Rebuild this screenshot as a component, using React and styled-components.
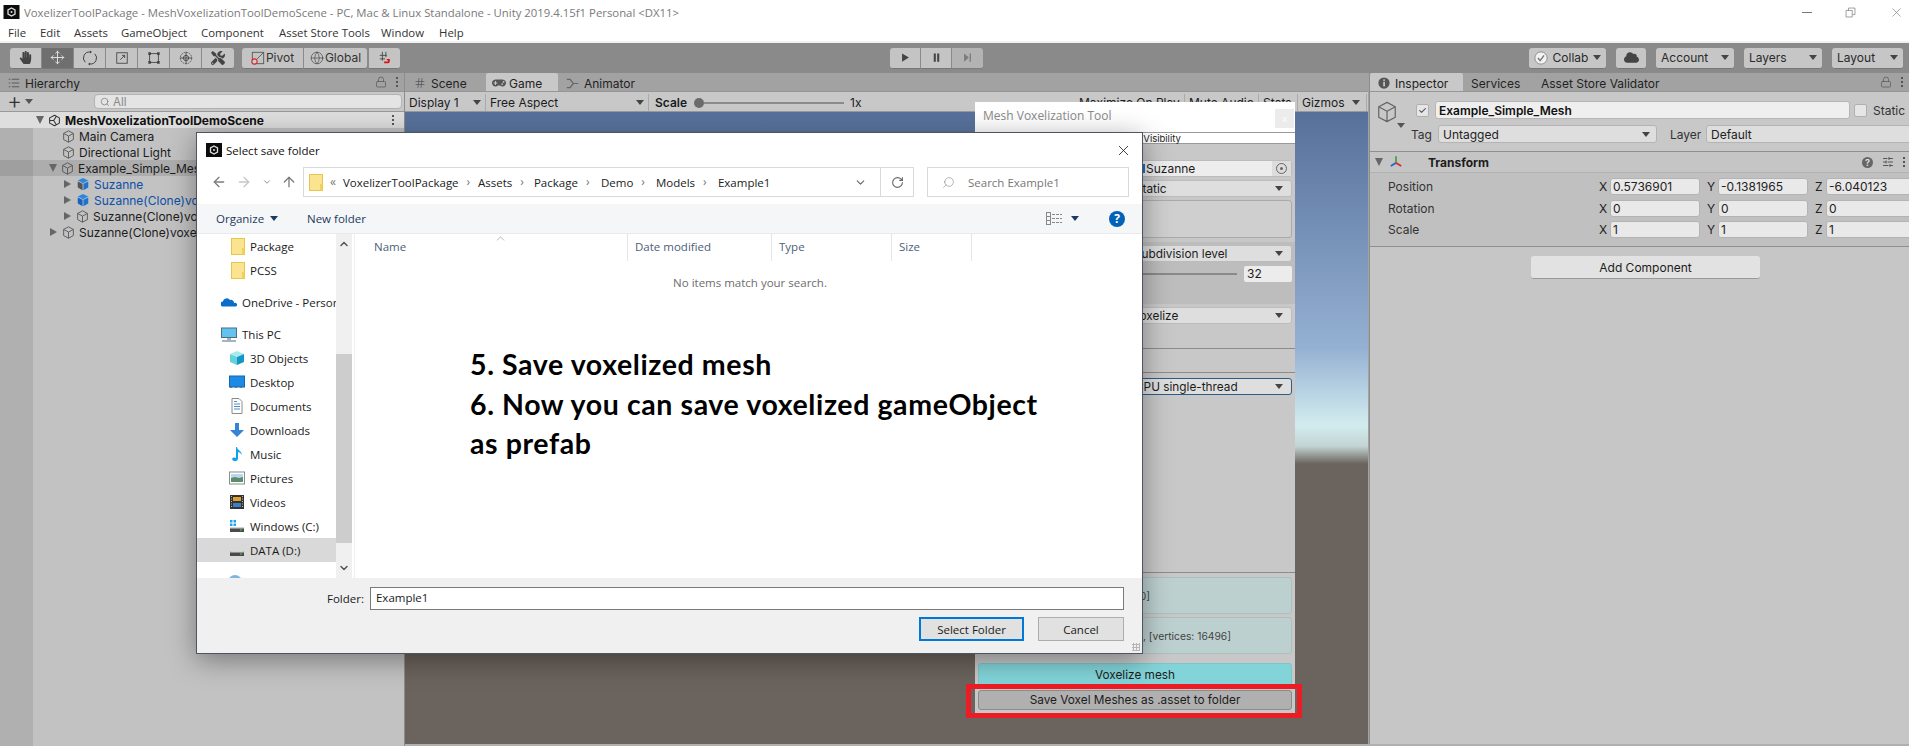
import React from 'react';
import styled, { createGlobalStyle } from 'styled-components';
import {
  ArrowLeft, ArrowRight, ArrowUp, ChevronDown, ChevronUp, Globe, Hash, Lock, Move, RotateCw, Search, SlidersHorizontal, X,
} from 'lucide-react';
import { FaCloud, FaGamepad, FaHandPaper, FaTools } from 'react-icons/fa';

const UNITY = '"Inter", "Liberation Sans", sans-serif';
const WIN = '"Open Sans", "Liberation Sans", sans-serif';

const GlobalStyle = createGlobalStyle`
  html, body { margin: 0; padding: 0; background: #fff; }
  * { box-sizing: border-box; }
`;

const Page = styled.div`
  position: relative;
  width: 1909px;
  height: 746px;
  overflow: hidden;
  display: flex;
  flex-direction: column;
  font-family: ${UNITY};
  font-size: 11.5px;
  color: #1c1c1c;
  background: #a2a2a2;
`;

/* ---- window chrome ---- */
const TitleBar = styled.div`
  height: 22px;
  flex: none;
  display: flex;
  align-items: center;
  padding: 2px 0 0 3px;
  gap: 4px;
  background: #fff;
  color: #7a7a7a;
  font-family: ${WIN};
  font-size: 11.37px;
  white-space: nowrap;
`;
const WinControls = styled.div`
  margin-left: auto;
  display: flex;
  align-items: center;
  gap: 33px;
  padding-right: 5px;
  color: #777;
`;
const MinDash = styled.div`
  width: 10px;
  height: 1px;
  background: #777;
`;
const MenuBar = styled.div`
  height: 21px;
  flex: none;
  display: flex;
  align-items: center;
  padding: 2px 0 0 8px;
  background: #fff;
  font-family: ${WIN};
  font-size: 11.4px;
  color: #333;
  border-bottom: 2px solid #f1f1f1;
`;
const MenuItem = styled.span`
  width: ${(p) => p.$w}px;
  flex: none;
`;
const Toolbar = styled.div`
  height: 30px;
  flex: none;
  display: flex;
  align-items: center;
  padding: 0 4px 0 10px;
  background: #8a8a8a;
`;
const BtnGroup = styled.div`
  display: flex;
  flex: none;
  height: 21px;
  margin-right: ${(p) => p.$mr || 0}px;
  margin-left: ${(p) => p.$ml || 0}px;
`;
const ToolBtn = styled.div`
  width: ${(p) => p.$w || 32}px;
  flex: none;
  display: flex;
  align-items: center;
  justify-content: center;
  gap: 1px;
  background: ${(p) => (p.$on ? '#6f6f6f' : '#c4c4c4')};
  border-right: 1px solid #8a8a8a;
  border-bottom: 1px solid #777;
  color: ${(p) => (p.$on ? '#ddd' : p.$dim ? '#777' : '#333')};
  font-size: 12px;
  white-space: nowrap;
  opacity: ${(p) => (p.$dim ? 0.72 : 1)};
  &:first-child { border-radius: 3px 0 0 3px; }
  &:last-child { border-radius: 0 3px 3px 0; border-right: 0; }
`;
const PlainBtn = styled.div`
  width: ${(p) => p.$w}px;
  height: 21px;
  flex: none;
  margin-right: 10px;
  padding: 0 5px;
  display: flex;
  align-items: center;
  justify-content: ${(p) => (p.$center ? 'center' : 'space-between')};
  background: #c6c6c6;
  border-bottom: 1px solid #777;
  border-radius: 3px;
  font-size: 12px;
  color: #2a2a2a;
  &:last-child { margin-right: 0; }
`;
const Caret = styled.i`
  display: inline-block;
  flex: none;
  border-left: 4px solid transparent;
  border-right: 4px solid transparent;
  border-top: 5px solid ${(p) => p.$c || '#444'};
`;

const Workspace = styled.div`
  flex: 1;
  display: flex;
  min-height: 0;
`;
const TabRow = styled.div`
  height: 19px;
  flex: none;
  display: flex;
  align-items: stretch;
  background: #a2a2a2;
  border-bottom: 1px solid #969696;
  font-size: 12px;
`;
const Tab = styled.div`
  width: ${(p) => p.$w}px;
  flex: none;
  padding: 2px 0 0 ${(p) => p.$pl ?? 8}px;
  display: flex;
  align-items: center;
  gap: ${(p) => p.$gap ?? 5}px;
  white-space: nowrap;
  background: ${(p) => (p.$on ? '#c8c8c8' : 'transparent')};
  border-radius: 2px 2px 0 0;
  color: #222;
`;
const TabTools = styled.div`
  margin-left: auto;
  width: 36px;
  display: flex;
  align-items: center;
  justify-content: center;
  gap: 9px;
  color: #555;
`;
const Dots = styled.span`
  width: 2px;
  height: 2px;
  flex: none;
  background: #555;
  box-shadow: 0 -4px 0 #555, 0 4px 0 #555;
`;

/* ---- hierarchy ---- */
const Hierarchy = styled.section`
  width: 405px;
  flex: none;
  display: flex;
  flex-direction: column;
  border-right: 1px solid #8d8d8d;
`;
const HierTools = styled.div`
  height: 20px;
  flex: none;
  display: flex;
  align-items: center;
  padding: 0 2px 0 7px;
  background: #c8c8c8;
  border-bottom: 1px solid #999;
`;
const PlusMark = styled.span`
  width: 87px;
  display: flex;
  align-items: center;
  gap: 3px;
  font-size: 23px;
  font-weight: 300;
  line-height: 17px;
  color: #333;
`;
const SearchBox = styled.div`
  flex: 1;
  height: 15px;
  display: flex;
  align-items: center;
  gap: 3px;
  padding-left: 5px;
  background: #e4e4e4;
  border: 1px solid #b2b2b2;
  border-radius: 4px;
  color: #888;
`;
const TreeBody = styled.div`
  flex: 1;
  background: linear-gradient(90deg, #b0b0b0 33px, #c2c2c2 33px);
`;
const SceneRow = styled.div`
  height: 16px;
  display: flex;
  align-items: center;
  padding: 0 10px 0 36px;
  gap: 4px;
  background: #dedede;
  font-weight: 700;
  font-size: 12px;
  color: #111;
`;
const SceneDots = styled(Dots)`
  margin-left: auto;
`;
const TreeRow = styled.div`
  height: 16px;
  display: flex;
  align-items: center;
  gap: 4px;
  padding-left: ${(p) => p.$indent}px;
  white-space: nowrap;
  font-size: 12px;
  overflow: hidden;
  color: ${(p) => (p.$blue ? '#0d4fa8' : '#1c1c1c')};
  background: ${(p) => (p.$sel ? 'linear-gradient(90deg, #9f9f9f 33px, #adadad 33px)' : 'transparent')};
`;
const Arrow = styled.i`
  display: inline-block;
  flex: none;
  width: 0;
  height: 0;
  ${(p) => (p.$down
    ? 'border-left: 4.5px solid transparent; border-right: 4.5px solid transparent; border-top: 8px solid #666;'
    : 'border-top: 4.5px solid transparent; border-bottom: 4.5px solid transparent; border-left: 7px solid #666; margin: 0 1px;')}
`;

/* ---- game view ---- */
const GamePanel = styled.section`
  width: 963px;
  flex: none;
  display: flex;
  flex-direction: column;
  margin-right: 1px;
`;
const GameTools = styled.div`
  height: 20px;
  flex: none;
  padding-top: 2px;
  display: flex;
  align-items: center;
  background: #c8c8c8;
  border-bottom: 1px solid #9a9a9a;
  white-space: nowrap;
  font-size: 12px;
`;
const GameCell = styled.div`
  width: ${(p) => p.$w}px;
  flex: none;
  height: 100%;
  padding: 0 ${(p) => p.$pr || 4}px 0 4px;
  display: flex;
  align-items: center;
  justify-content: space-between;
  border-right: 1px solid #aaa;
`;
const ScaleSlider = styled.div`
  width: 426px;
  flex: none;
  display: flex;
  align-items: center;
  padding-left: 6px;
  font-weight: 600;
`;
const ScaleThumb = styled.i`
  width: 10px;
  height: 10px;
  margin-left: 7px;
  flex: none;
  border-radius: 50%;
  background: #6b6b6b;
`;
const ScaleLine = styled.i`
  width: 140px;
  height: 2px;
  background: #8b8b8b;
  margin-right: 6px;
`;
const ScaleValue = styled.span`
  font-weight: 400;
`;
const Viewport = styled.div`
  flex: 1;
  background: linear-gradient(180deg, #56709a 0, #94b0d2 235px, #d2ecee 313px, #c4d4d4 334px, #6b635d 352px, #6b635d 100%);
`;

/* ---- tool window floating on the game view ---- */
const ToolWindow = styled.div`
  position: absolute;
  left: 975px;
  top: 102px;
  width: 320px;
  height: 611px;
  display: flex;
  flex-direction: column;
  background: #c8c8c8;
  font-size: 11.8px;
  white-space: nowrap;
`;
const ToolHead = styled.div`
  height: 30px;
  flex: none;
  display: flex;
  justify-content: space-between;
  padding-left: 8px;
  padding-top: 5px;
  background: #fff;
  color: #8a8a8a;
  font-family: ${WIN};
  font-size: 12px;
`;
const ToolClose = styled.div`
  width: 19px;
  height: 19px;
  margin: 2px 1px 0 0;
  background: #ececec;
  color: #fff;
  font-size: 9px;
  text-align: center;
  line-height: 19px;
`;
const ToolStrip = styled.div`
  height: 12px;
  flex: none;
  margin-bottom: 16px;
  padding-left: 137px;
  display: flex;
  align-items: center;
  background: #fff;
  border: 1px solid #999;
  border-width: 1px 0;
  font-size: 9.5px;
  color: #222;
`;
const ToolField = styled.div`
  height: ${(p) => p.$h || 17}px;
  flex: none;
  margin: ${(p) => p.$mt || 0}px 3px 0 6px;
  padding-left: ${(p) => p.$pl || 153}px;
  padding-right: 8px;
  display: flex;
  align-items: center;
  justify-content: space-between;
  background: ${(p) => p.$bg || '#dedede'};
  border: 1px solid ${(p) => p.$line || '#bcbcbc'};
  border-radius: 3px;
`;
const ObjectField = styled(ToolField)`
  padding-right: 0;
  font-size: 12px;
`;
const ObjectName = styled.span`
  display: flex;
  align-items: center;
  gap: 1px;
`;
const ObjectMark = styled.i`
  width: 5px;
  height: 9px;
  background: #1f6fc8;
`;
const PickerBox = styled.div`
  width: 19px;
  height: 100%;
  display: flex;
  align-items: center;
  justify-content: center;
  background: #dcdcdc;
`;
const PickerDot = styled.i`
  width: 11px;
  height: 11px;
  border-radius: 50%;
  border: 1px solid #666;
  position: relative;
  &::after {
    content: '';
    position: absolute;
    left: 3px;
    top: 3px;
    width: 3px;
    height: 3px;
    border-radius: 50%;
    background: #666;
  }
`;
const ToolBand = styled.div`
  height: 62px;
  flex: none;
  margin-top: 4px;
  padding-top: 3px;
  background: #bdbdbd;
`;
const SliderLine = styled.div`
  height: 17px;
  margin: 3px 3px 0 6px;
  display: flex;
  align-items: center;
  justify-content: flex-end;
  gap: 7px;
`;
const SliderTrack = styled.i`
  width: 100px;
  height: 2px;
  background: #8a8a8a;
`;
const SliderValue = styled.span`
  width: 48px;
  height: 16px;
  padding-left: 3px;
  line-height: 16px;
  background: #ececec;
  border-radius: 2px;
  font-size: 12px;
`;
const ToolGap = styled.div`
  height: ${(p) => p.$h}px;
  flex: none;
  padding: 5px 0 0 6px;
  border-bottom: 1px solid #8c8c8c;
`;
const TinyField = styled.div`
  width: 162px;
  height: 13px;
  background: #d4d4d4;
  border: 1px solid #b0b0b0;
  border-radius: 2px;
`;
const TealBox = styled.div`
  height: 37px;
  flex: none;
  margin: ${(p) => p.$mt}px 3px 0 3px;
  padding-right: ${(p) => p.$pr}px;
  display: flex;
  align-items: center;
  justify-content: flex-end;
  background: #bdd0d0;
  border: 1px solid #adbebe;
  border-radius: 3px;
  color: #444;
  font-size: 10.3px;
`;
const ActionBtn = styled.div`
  height: ${(p) => p.$h}px;
  flex: none;
  margin: ${(p) => p.$mt}px 3px 0 3px;
  display: flex;
  align-items: center;
  justify-content: center;
  background: ${(p) => p.$bg};
  border: 1px solid ${(p) => p.$line};
  border-radius: 3px;
`;
const RedFrame = styled.div`
  position: absolute;
  left: 966px;
  top: 684px;
  width: 336px;
  height: 34px;
  border: 5px solid #ed1c24;
`;

/* ---- inspector ---- */
const Inspector = styled.section`
  flex: 1;
  min-width: 0;
  display: flex;
  flex-direction: column;
  background: #c6c6c6;
  border-left: 1px solid #8d8d8d;
`;
const InspHead = styled.div`
  height: 60px;
  flex: none;
  padding: 9px 0 0 6px;
  display: flex;
  background: #c8c8c8;
  border-bottom: 1px solid #8f8f8f;
`;
const ObjectIcon = styled.div`
  position: relative;
  flex: none;
  width: 22px;
  height: 22px;
  color: #666;
`;
const ObjectCaret = styled(Caret)`
  position: absolute;
  right: -7px;
  bottom: -5px;
`;
const InspMain = styled.div`
  flex: 1;
  min-width: 0;
  margin-left: 13px;
  overflow: hidden;
`;
const InspLine = styled.div`
  height: 18px;
  display: flex;
  align-items: center;
  margin-bottom: 6px;
  padding-left: ${(p) => p.$pl || 0}px;
  font-size: 12px;
  white-space: nowrap;
  color: #333;
`;
const CheckBox = styled.div`
  width: 13px;
  height: 13px;
  flex: none;
  display: flex;
  align-items: center;
  justify-content: center;
  margin: 0 6px 0 ${(p) => p.$ml || 0}px;
  background: #e6e6e6;
  border: 1px solid #b0b0b0;
  border-radius: 2px;
  color: #333;
  font-size: 10px;
  line-height: 1;
`;
const NameInput = styled.div`
  width: 415px;
  height: 18px;
  flex: none;
  padding-left: 3px;
  line-height: 17px;
  background: #efefef;
  border: 1px solid #b6b6b6;
  border-radius: 3px;
  font-weight: 600;
  color: #111;
`;
const FieldLabel = styled.span`
  width: ${(p) => p.$w}px;
  flex: none;
`;
const Select = styled.div`
  width: ${(p) => p.$w}px;
  height: 18px;
  flex: none;
  margin-right: ${(p) => p.$mr || 0}px;
  padding: 0 6px 0 4px;
  display: flex;
  align-items: center;
  justify-content: space-between;
  background: #dedede;
  border: 1px solid #b4b4b4;
  border-radius: 3px;
  color: #222;
`;
const CompHead = styled.div`
  height: 21px;
  flex: none;
  padding: 0 4px 0 5px;
  display: flex;
  align-items: center;
  background: #c5c5c5;
  border-bottom: 1px solid #b2b2b2;
  font-weight: 700;
  font-size: 12px;
`;
const CompIcon = styled.span`
  margin-left: 6px;
`;
const CompName = styled.span`
  margin-left: 25px;
`;
const CompTools = styled.span`
  margin-left: auto;
  display: flex;
  align-items: center;
  gap: 9px;
  color: #555;
`;
const HelpDot = styled.i`
  width: 11px;
  height: 11px;
  border-radius: 50%;
  background: #666;
  color: #ddd;
  font: 700 9px/11px ${UNITY};
  text-align: center;
`;
const TransformBody = styled.div`
  flex: none;
  padding: 5px 0 8px 18px;
  border-bottom: 1px solid #8f8f8f;
  background: #c0c0c0;
  overflow: hidden;
`;
const VecRow = styled.div`
  height: 17px;
  margin-bottom: ${(p) => p.$mb}px;
  display: flex;
  align-items: center;
  font-size: 12px;
  color: #333;
`;
const VecLabel = styled.span`
  width: 211px;
  flex: none;
`;
const Axis = styled.span`
  width: 11px;
  flex: none;
  color: #222;
`;
const VecInput = styled.span`
  width: 90px;
  height: 17px;
  flex: none;
  margin-right: 7px;
  padding-left: 2px;
  line-height: 16px;
  background: #e9e9e9;
  border: 1px solid #b4b4b4;
  border-radius: 3px;
  color: #222;
  overflow: hidden;
`;
const AddComponent = styled.div`
  width: 229px;
  height: 23px;
  flex: none;
  margin: 9px 0 0 161px;
  display: flex;
  align-items: center;
  justify-content: center;
  background: #e2e2e2;
  border-bottom: 1px solid #999;
  border-radius: 3px;
  font-size: 12px;
`;
const BottomEdge = styled.div`
  position: absolute;
  left: 405px;
  right: 0;
  bottom: 0;
  height: 2px;
  background: #b0b0b0;
`;

/* ---- file dialog ---- */
const Dialog = styled.div`
  position: absolute;
  left: 196px;
  top: 132px;
  width: 947px;
  height: 522px;
  display: flex;
  flex-direction: column;
  background: #fff;
  border: 1px solid #4f5560;
  box-shadow: 0 6px 26px rgba(0, 0, 0, 0.38);
  font-family: ${WIN};
  font-size: 11.5px;
  color: #1a1a1a;
  white-space: nowrap;
`;
const DlgTitle = styled.div`
  height: 34px;
  flex: none;
  padding: 0 10px 0 9px;
  display: flex;
  align-items: center;
  gap: 4px;
  color: #111;
`;
const DlgClose = styled.div`
  margin-left: auto;
  display: flex;
  color: #111;
`;
const DlgNav = styled.div`
  height: 37px;
  flex: none;
  display: flex;
  padding-right: 13px;
`;
const NavArrows = styled.div`
  width: 106px;
  flex: none;
  padding: 0 6px 0 14px;
  height: 30px;
  display: flex;
  align-items: center;
  justify-content: space-between;
  color: #7d7d7d;
`;
const AddressBar = styled.div`
  width: 611px;
  flex: none;
  height: 30px;
  display: flex;
  align-items: center;
  padding-left: 5px;
  border: 1px solid #d9d9d9;
  color: #222;
`;
const FirstCrumb = styled.span`
  margin-right: 7px;
  display: flex;
  align-items: center;
  gap: 7px;
`;
const Crumb = styled.span`
  width: ${(p) => p.$w}px;
  flex: none;
  display: flex;
  align-items: center;
  gap: 8px;
`;
const CrumbSep = styled.span`
  color: #777;
  font-size: 12px;
  line-height: 1;
`;
const AddrEnd = styled.div`
  margin-left: auto;
  height: 100%;
  display: flex;
  align-items: center;
  color: #666;
`;
const AddrRefresh = styled.div`
  width: 33px;
  height: 100%;
  margin-left: 13px;
  display: flex;
  align-items: center;
  justify-content: center;
  border-left: 1px solid #d9d9d9;
`;
const SearchField = styled.div`
  width: 202px;
  flex: none;
  height: 30px;
  margin-left: 13px;
  padding-left: 14px;
  display: flex;
  align-items: center;
  gap: 13px;
  border: 1px solid #d9d9d9;
  color: #777;
`;
const MirrorIcon = styled.span`
  display: flex;
  transform: scaleX(-1);
`;
const CmdBar = styled.div`
  height: 30px;
  flex: none;
  display: flex;
  align-items: center;
  padding: 0 17px 0 19px;
  background: #f5f6f7;
  border-bottom: 1px solid #eaeaea;
  color: #1d3a60;
`;
const CmdItem = styled.span`
  width: ${(p) => p.$w}px;
  display: flex;
  align-items: center;
  gap: 6px;
`;
const ViewTools = styled.div`
  margin-left: auto;
  display: flex;
  align-items: center;
  gap: 8px;
`;
const HelpBadge = styled.i`
  width: 16px;
  height: 16px;
  margin-left: 22px;
  border-radius: 50%;
  background: #0063b8;
  color: #fff;
  font: 700 12px/16px ${WIN};
  text-align: center;
`;
const DlgMain = styled.div`
  flex: 1;
  min-height: 0;
  display: flex;
`;
const NavPane = styled.div`
  width: 139px;
  flex: none;
  overflow: hidden;
`;
const NavItem = styled.div`
  height: 24px;
  margin-top: ${(p) => p.$mt || 0}px;
  display: flex;
  align-items: center;
  gap: 5px;
  padding-left: ${(p) => p.$pl}px;
  background: ${(p) => (p.$sel ? '#d9d9d9' : 'transparent')};
  overflow: hidden;
`;
const ScrollBar = styled.div`
  width: 16px;
  flex: none;
  display: flex;
  flex-direction: column;
  background: #f0f0f0;
  color: #555;
`;
const ScrollEnd = styled.div`
  height: ${(p) => p.$h}px;
  display: flex;
  align-items: ${(p) => p.$align};
  justify-content: center;
  padding: 4px 0;
`;
const ScrollThumb = styled.div`
  height: 189px;
  background: #cdcdcd;
`;
const FileList = styled.div`
  position: relative;
  flex: 1;
  margin-left: 2px;
  border-left: 1px solid #efefef;
`;
const ListHead = styled.div`
  height: 27px;
  display: flex;
  color: #4c607a;
`;
const ListCol = styled.div`
  width: ${(p) => p.$w}px;
  flex: none;
  padding-left: ${(p) => p.$pl || 7}px;
  padding-top: 5px;
  border-right: 1px solid #e5e5e5;
`;
const SortMark = styled.span`
  position: absolute;
  left: 139px;
  top: -2px;
  color: #777;
`;
const EmptyNote = styled.div`
  padding: 14px 0 0 40px;
  width: 750px;
  text-align: center;
  color: #6d6d6d;
`;
const Footer = styled.div`
  position: relative;
  height: 75px;
  flex: none;
  padding: 9px 18px 0 130px;
  background: #f0f0f0;
`;
const FolderLine = styled.div`
  display: flex;
  align-items: center;
  gap: 6px;
`;
const FolderInput = styled.div`
  flex: 1;
  height: 23px;
  padding-left: 5px;
  line-height: 20px;
  background: #fff;
  border: 1px solid #7a7a7a;
`;
const ButtonLine = styled.div`
  margin-top: 7px;
  display: flex;
  justify-content: flex-end;
  gap: 14px;
`;
const DlgButton = styled.div`
  width: ${(p) => p.$w}px;
  height: 24px;
  display: flex;
  align-items: center;
  justify-content: center;
  background: #e1e1e1;
  border: ${(p) => (p.$primary ? '2px solid #0078d7' : '1px solid #adadad')};
`;
const Grip = styled.i`
  position: absolute;
  right: 2px;
  bottom: 2px;
  width: 8px;
  height: 8px;
  background-image: radial-gradient(circle, #b5b5b5 1px, transparent 1.2px);
  background-size: 3px 3px;
`;
const Annotation = styled.div`
  position: absolute;
  left: 470px;
  top: 345px;
  width: 600px;
  font-family: "Lato", "Open Sans", sans-serif;
  font-weight: 700;
  font-size: 28.5px;
  line-height: 39.5px;
  letter-spacing: 0.6px;
  color: #000;
`;

/* ---- drawn icons ---- */
const Svg = ({ s = 14, w, h, vb = '0 0 16 16', children, fill = 'none' }) => (
  <svg width={w || s} height={h || s} viewBox={vb} fill={fill} style={{ flex: 'none', display: 'block' }}>{children}</svg>
);
const Cube = ({ s = 13, c = '#555' }) => (
  <Svg s={s}>
    <path d="M8 1l6 3.2v7.6L8 15l-6-3.2V4.2z M2 4.2L8 7.5l6-3.3 M8 7.5V15" stroke={c} strokeWidth="1.1" strokeLinejoin="round" />
  </Svg>
);
const BlueCube = () => (
  <Svg s={14}>
    <path d="M8 1l6 3-6 3-6-3z" fill="#2f86e0" />
    <path d="M2 5l5.5 2.8V15L2 12z" fill="#1763bd" />
    <path d="M14 5L8.5 7.8V15l5.5-3z" fill="#1f73d0" />
  </Svg>
);
const HalfCube = () => (
  <Svg s={14}>
    <path d="M8 1l6 3-6 3-6-3z" fill="#2f86e0" />
    <path d="M2 5l5.5 2.8V15L2 12z" fill="#555" />
    <path d="M14 5L8.5 7.8V15l5.5-3z" fill="#1f73d0" />
  </Svg>
);
const UnityMark = ({ s = 13, c = '#333' }) => (
  <Svg s={s}>
    <path d="M8 1.5l6 3.3v6.4l-6 3.3-6-3.3V4.8z M2.5 8H7l3.5-5.5 M7 8l3.5 5.5" stroke={c} strokeWidth="1.3" strokeLinejoin="round" />
  </Svg>
);
const UnityTile = ({ w = 16, h = 14 }) => (
  <svg width={w} height={h} viewBox="0 0 16 14" style={{ flex: 'none', display: 'block' }}>
    <rect width="16" height="14" fill="#0c0c0c" />
    <path d="M8 3l3.5 2v4L8 11 4.5 9V5z" fill="none" stroke="#ddd" strokeWidth="1.3" />
    <circle cx="8" cy="7" r="1" fill="#ddd" />
  </svg>
);
const Folder = () => (
  <Svg w={14} h={17} vb="0 0 14 17">
    <rect x="0.5" y="0.5" width="13" height="16" fill="#fbe48f" stroke="#e6c64f" />
    <rect x="11" y="10" width="2.5" height="6.5" fill="#f3cf5c" />
  </Svg>
);
const OneDrive = () => (
  <Svg s={16}>
    <path d="M1 12.5a2.6 2.6 0 01.8-5A4 4 0 019 6a3 3 0 014 3 2 2 0 012 3.5z" fill="#0a6dc8" />
  </Svg>
);
const PcIcon = () => (
  <Svg s={16}>
    <rect x="0.5" y="2" width="15" height="9.5" fill="#63c2f0" stroke="#4d6f85" />
    <path d="M6 13h4 M1 15h14" stroke="#8a9aa6" strokeWidth="1.3" />
  </Svg>
);
const Objects3D = () => (
  <Svg s={16}>
    <path d="M8 1l7 3-7 3-7-3z" fill="#a6ecec" />
    <path d="M1 4l7 3v8l-7-3z" fill="#64d2d8" />
    <path d="M15 4L8 7v8l7-3z" fill="#1596c8" />
  </Svg>
);
const DesktopIcon = () => (
  <Svg s={16}>
    <rect x="0.5" y="2" width="15" height="11" fill="#1d8ae6" stroke="#1366b2" />
    <path d="M1 13.5h14" stroke="#777" strokeWidth="1" strokeDasharray="2 3" />
  </Svg>
);
const DocIcon = () => (
  <Svg s={16}>
    <path d="M3 .5h7l3 3v12H3z" fill="#fff" stroke="#8c8c8c" />
    <path d="M5 6h6 M5 8.5h6 M5 11h6 M5 3.5h3" stroke="#4d90c8" strokeWidth="1" />
  </Svg>
);
const DownIcon = () => (
  <Svg s={16}>
    <path d="M6 1h4v7h5l-7 7-7-7h5z" fill="#3584d6" />
  </Svg>
);
const MusicIcon = () => (
  <Svg s={16}>
    <path d="M8 1c0 3 5 4 5 8-1-2-3-3-4-3v6.5c0 2-2 3-4 2.5S2.5 12 4.5 11.5c1-.2 2 0 2.5.5V1z" fill="#10a0ee" />
  </Svg>
);
const PicIcon = () => (
  <Svg s={16}>
    <rect x="0.5" y="2" width="15" height="12" fill="#fff" stroke="#8c8c8c" />
    <rect x="2" y="4" width="12" height="4" fill="#b5d9ea" />
    <path d="M2 8l4-1 4 1 4-1v5H2z" fill="#5e8a6e" />
  </Svg>
);
const VideoIcon = () => (
  <Svg s={16}>
    <rect x="1" y="1" width="14" height="14" fill="#333" />
    <rect x="4" y="3" width="8" height="4" fill="#e0a030" />
    <rect x="4" y="9" width="8" height="4" fill="#3a80c8" />
    <path d="M2.5 2v12" stroke="#bbb" strokeDasharray="1 1.5" />
    <path d="M13.5 2v12" stroke="#bbb" strokeDasharray="1 1.5" />
  </Svg>
);
const DriveIcon = ({ win }) => (
  <Svg s={16}>
    {win && <path d="M1 2h2.5v2.5H1z M4.5 2H7v2.5H4.5z M1 5.5h2.5V8H1z M4.5 5.5H7V8H4.5z" fill="#18a6ee" />}
    <path d="M2 9h12l1 2v3H1v-3z" fill="#4a4a4a" />
    <path d="M2 9h12l.5 1.5h-13z" fill="#d4d4d4" />
    <rect x="11" y="11.5" width="2" height="1" fill="#4fd060" />
  </Svg>
);
const NetworkIcon = () => (
  <Svg s={16}>
    <circle cx="8" cy="8" r="7" fill="#7fb6de" />
  </Svg>
);
const ViewIcon = () => (
  <Svg w={17} h={13} vb="0 0 17 13">
    <rect x="0.5" y="0.5" width="4" height="12" fill="none" stroke="#888" />
    <path d="M1 4.5h3 M1 8.5h3 M6 2.5h10 M6 6.5h10 M6 10.5h10" stroke="#888" strokeDasharray="3 1" />
  </Svg>
);
const RotateTool = () => (
  <Svg s={16}>
    <path d="M3.2 12.2A6 6 0 0 1 8 2 M12.8 3.8A6 6 0 0 1 8 14" stroke="#444" strokeWidth="1" />
    <path d="M8 .5v3l2-1.5z M8 15.5v-3l-2 1.5z" fill="#444" />
  </Svg>
);
const ScaleTool = () => (
  <Svg>
    <rect x="2" y="2" width="12" height="12" stroke="#444" />
    <path d="M6 10l5-5 M8 5h3v3" stroke="#444" />
  </Svg>
);
const RectTool = () => (
  <Svg>
    <rect x="3" y="3" width="10" height="10" stroke="#444" />
    <path d="M1.5 1.5h3v3h-3z M11.5 1.5h3v3h-3z M1.5 11.5h3v3h-3z M11.5 11.5h3v3h-3z" fill="#444" />
  </Svg>
);
const ComboTool = () => (
  <Svg>
    <circle cx="8" cy="8" r="6.5" stroke="#555" strokeDasharray="2 1" />
    <path d="M8 1v14 M1 8h14" stroke="#444" />
    <circle cx="8" cy="8" r="3" stroke="#444" />
  </Svg>
);
const PivotIcon = () => (
  <Svg>
    <rect x="1.5" y="1.5" width="13" height="13" stroke="#555" />
    <path d="M5 11L14 2" stroke="#555" />
    <circle cx="4" cy="12" r="3" fill="#ccc" stroke="#d22" strokeWidth="1.2" />
  </Svg>
);
const MagnetSnap = () => (
  <Svg>
    <path d="M2 5h8 M2 9h6 M5 1v10 M9 1v6" stroke="#444" />
    <path d="M10 9h3.5v2a3 3 0 01-3 3H7v-2h3.5a1 1 0 001-1v-.5H10z" fill="#d11" />
  </Svg>
);
const CheckCircle = () => (
  <Svg>
    <circle cx="8" cy="8" r="7" fill="#f2f2f2" stroke="#888" />
    <path d="M4.5 8l2.5 3 4.5-6" stroke="#777" strokeWidth="1.6" />
  </Svg>
);
const InfoIcon = () => (
  <Svg s={12}>
    <circle cx="8" cy="8" r="7.5" fill="#555" />
    <rect x="7" y="6.5" width="2.2" height="6" fill="#ccc" />
    <rect x="7" y="3.2" width="2.2" height="2" fill="#ccc" />
  </Svg>
);
const Axes = () => (
  <Svg>
    <path d="M8 1.5v7" stroke="#3fa33f" strokeWidth="2" />
    <path d="M8 9l-6 3.5" stroke="#2a66c8" strokeWidth="2" />
    <path d="M8 9l6 3.5" stroke="#d43030" strokeWidth="2" />
  </Svg>
);
const ListGlyph = () => (
  <Svg s={12}>
    <path d="M1 3h2 M1 8h2 M1 13h2 M5 3h10 M5 8h10 M5 13h10" stroke="#555" strokeWidth="1.2" />
  </Svg>
);
const Animator = () => (
  <Svg s={13}>
    <path d="M1 3h4l4 5h6 M1 13h4l4-5" stroke="#666" strokeWidth="1.5" />
  </Svg>
);
const PlayTri = ({ c = '#444' }) => (
  <Svg s={11}><path d="M3 2l10 6-10 6z" fill={c} /></Svg>
);
const PauseBars = () => (
  <Svg s={11}><path d="M4 2h3v12H4z M9 2h3v12H9z" fill="#444" /></Svg>
);
const StepGlyph = () => (
  <Svg s={11}><path d="M3 2l7 6-7 6z M11 2h2v12h-2z" fill="#777" /></Svg>
);

const NAV = [
  { label: 'Package', pl: 34, icon: <Folder /> },
  { label: 'PCSS', pl: 34, icon: <Folder /> },
  { label: 'OneDrive - Personal', pl: 24, mt: 8, icon: <OneDrive /> },
  { label: 'This PC', pl: 24, mt: 8, icon: <PcIcon /> },
  { label: '3D Objects', pl: 32, icon: <Objects3D /> },
  { label: 'Desktop', pl: 32, icon: <DesktopIcon /> },
  { label: 'Documents', pl: 32, icon: <DocIcon /> },
  { label: 'Downloads', pl: 32, icon: <DownIcon /> },
  { label: 'Music', pl: 32, icon: <MusicIcon /> },
  { label: 'Pictures', pl: 32, icon: <PicIcon /> },
  { label: 'Videos', pl: 32, icon: <VideoIcon /> },
  { label: 'Windows (C:)', pl: 32, icon: <DriveIcon win /> },
  { label: 'DATA (D:)', pl: 32, sel: true, icon: <DriveIcon /> },
  { label: '', pl: 30, mt: 8, icon: <NetworkIcon /> },
];

const VECTORS = [
  { label: 'Position', x: '0.5736901', y: '-0.1381965', z: '-6.040123', mb: 5 },
  { label: 'Rotation', x: '0', y: '0', z: '0', mb: 4 },
  { label: 'Scale', x: '1', y: '1', z: '1', mb: 0 },
];

const CRUMBS = [
  { name: 'VoxelizerToolPackage', w: 135 },
  { name: 'Assets', w: 56 },
  { name: 'Package', w: 67 },
  { name: 'Demo', w: 55 },
  { name: 'Models', w: 62 },
  { name: 'Example1', w: 60 },
];

export default function App() {
  return (
    <Page>
      <GlobalStyle />
      <TitleBar>
        <UnityTile w={17} h={14} />
        VoxelizerToolPackage - MeshVoxelizationToolDemoScene - PC, Mac &amp; Linux Standalone - Unity 2019.4.15f1 Personal &lt;DX11&gt;
        <WinControls>
          <MinDash />
          <Svg s={11}><path d="M1.5 5h9v9.5h-9z M5 5V1.5h9.5V11H11" stroke="#777" /></Svg>
          <X size={15} strokeWidth={1} />
        </WinControls>
      </TitleBar>
      <MenuBar>
        <MenuItem $w={32}>File</MenuItem>
        <MenuItem $w={34}>Edit</MenuItem>
        <MenuItem $w={47}>Assets</MenuItem>
        <MenuItem $w={80}>GameObject</MenuItem>
        <MenuItem $w={78}>Component</MenuItem>
        <MenuItem $w={102}>Asset Store Tools</MenuItem>
        <MenuItem $w={58}>Window</MenuItem>
        <MenuItem $w={40}>Help</MenuItem>
      </MenuBar>
      <Toolbar>
        <BtnGroup $mr={8}>
          <ToolBtn><FaHandPaper size={13} color="#444" /></ToolBtn>
          <ToolBtn $on><Move size={15} strokeWidth={1.6} /></ToolBtn>
          <ToolBtn><RotateTool /></ToolBtn>
          <ToolBtn><ScaleTool /></ToolBtn>
          <ToolBtn><RectTool /></ToolBtn>
          <ToolBtn><ComboTool /></ToolBtn>
          <ToolBtn><FaTools size={14} color="#444" /></ToolBtn>
        </BtnGroup>
        <BtnGroup $mr={2}>
          <ToolBtn $w={62}><PivotIcon />Pivot</ToolBtn>
          <ToolBtn $w={63}><Globe size={14} strokeWidth={1} />Global</ToolBtn>
        </BtnGroup>
        <BtnGroup>
          <ToolBtn $w={31}><MagnetSnap /></ToolBtn>
        </BtnGroup>
        <BtnGroup $ml={490}>
          <ToolBtn $w={31}><PlayTri /></ToolBtn>
          <ToolBtn $w={31}><PauseBars /></ToolBtn>
          <ToolBtn $w={31} $dim><StepGlyph /></ToolBtn>
        </BtnGroup>
        <BtnGroup $ml={546} />
        <PlainBtn $w={77}><CheckCircle />Collab<Caret /></PlainBtn>
        <PlainBtn $w={30} $center><FaCloud size={15} color="#444" /></PlainBtn>
        <PlainBtn $w={78}>Account<Caret /></PlainBtn>
        <PlainBtn $w={78}>Layers<Caret /></PlainBtn>
        <PlainBtn $w={71}>Layout<Caret /></PlainBtn>
      </Toolbar>
      <Workspace>
        <Hierarchy>
          <TabRow>
            <Tab $w={96}><ListGlyph />Hierarchy</Tab>
            <TabTools><Lock size={12} strokeWidth={1.4} /><Dots /></TabTools>
          </TabRow>
          <HierTools>
            <PlusMark>+<Caret $c="#555" /></PlusMark>
            <SearchBox><Search size={10} />All</SearchBox>
          </HierTools>
          <TreeBody>
            <SceneRow>
              <Arrow $down /><UnityMark />
              MeshVoxelizationToolDemoScene
              <SceneDots />
            </SceneRow>
            <TreeRow $indent={62}><Cube />Main Camera</TreeRow>
            <TreeRow $indent={62}><Cube />Directional Light</TreeRow>
            <TreeRow $indent={49} $sel><Arrow $down /><Cube />Example_Simple_Mesh</TreeRow>
            <TreeRow $indent={63} $blue><Arrow /><HalfCube />Suzanne</TreeRow>
            <TreeRow $indent={63} $blue><Arrow /><BlueCube />Suzanne(Clone)voxelized</TreeRow>
            <TreeRow $indent={63}><Arrow /><Cube />Suzanne(Clone)voxelized</TreeRow>
            <TreeRow $indent={49}><Arrow /><Cube />Suzanne(Clone)voxelized</TreeRow>
          </TreeBody>
        </Hierarchy>
        <GamePanel>
          <TabRow>
            <Tab $w={81} $pl={9}><Hash size={12} strokeWidth={1.5} color="#555" />Scene</Tab>
            <Tab $w={72} $on $pl={6} $gap={3}><FaGamepad size={14} color="#555" />Game</Tab>
            <Tab $w={90}><Animator />Animator</Tab>
          </TabRow>
          <GameTools>
            <GameCell $w={81}>Display 1<Caret /></GameCell>
            <GameCell $w={163}>Free Aspect<Caret /></GameCell>
            <ScaleSlider>Scale<ScaleThumb /><ScaleLine /><ScaleValue>1x</ScaleValue></ScaleSlider>
            <GameCell $w={110}>Maximize On Play</GameCell>
            <GameCell $w={74}>Mute Audio</GameCell>
            <GameCell $w={39}>Stats</GameCell>
            <GameCell $w={69} $pr={6}>Gizmos<Caret /></GameCell>
          </GameTools>
          <Viewport />
        </GamePanel>
        <Inspector>
          <TabRow>
            <Tab $w={93} $on><InfoIcon />Inspector</Tab>
            <Tab $w={78}>Services</Tab>
            <Tab $w={150} $pl={0}>Asset Store Validator</Tab>
            <TabTools><Lock size={12} strokeWidth={1.4} /><Dots /></TabTools>
          </TabRow>
          <InspHead>
            <ObjectIcon>
              <Svg s={22}><path d="M8 1l6 3.2v7.6L8 15l-6-3.2V4.2z M2 4.2L8 7.5l6-3.3 M8 7.5V15" stroke="#666" strokeWidth="0.9" strokeLinejoin="round" /></Svg>
              <ObjectCaret $c="#555" />
            </ObjectIcon>
            <InspMain>
              <InspLine $pl={5}>
                <CheckBox>✓</CheckBox>
                <NameInput>Example_Simple_Mesh</NameInput>
                <CheckBox $ml={4} />
                <span>Static</span>
              </InspLine>
              <InspLine>
                <FieldLabel $w={27}>Tag</FieldLabel>
                <Select $w={219} $mr={13}>Untagged<Caret /></Select>
                <FieldLabel $w={36}>Layer</FieldLabel>
                <Select $w={220}>Default<Caret /></Select>
              </InspLine>
            </InspMain>
          </InspHead>
          <CompHead>
            <Arrow $down />
            <CompIcon><Axes /></CompIcon>
            <CompName>Transform</CompName>
            <CompTools><HelpDot>?</HelpDot><SlidersHorizontal size={12} /><Dots /></CompTools>
          </CompHead>
          <TransformBody>
            {VECTORS.map((v) => (
              <VecRow key={v.label} $mb={v.mb}>
                <VecLabel>{v.label}</VecLabel>
                <Axis>X</Axis><VecInput>{v.x}</VecInput>
                <Axis>Y</Axis><VecInput>{v.y}</VecInput>
                <Axis>Z</Axis><VecInput>{v.z}</VecInput>
              </VecRow>
            ))}
          </TransformBody>
          <AddComponent>Add Component</AddComponent>
        </Inspector>
      </Workspace>
      <BottomEdge />

      <ToolWindow>
        <ToolHead>Mesh Voxelization Tool<ToolClose>x</ToolClose></ToolHead>
        <ToolStrip>Gizmo Visibility</ToolStrip>
        <ObjectField $bg="#ededed" $pl={158}>
          <ObjectName><ObjectMark />Suzanne</ObjectName>
          <PickerBox><PickerDot /></PickerBox>
        </ObjectField>
        <ToolField $mt={3}>Static<Caret /></ToolField>
        <ToolField $mt={3} $h={38} $bg="#cfcfcf" $line="#aaa" />
        <ToolBand>
          <ToolField $pl={152}>Subdivision level<Caret /></ToolField>
          <SliderLine><SliderTrack /><SliderValue>32</SliderValue></SliderLine>
        </ToolBand>
        <ToolField $mt={3} $pl={150}>Voxelize<Caret /></ToolField>
        <ToolGap $h={25}><TinyField /></ToolGap>
        <ToolGap $h={24} />
        <ToolField $mt={5} $line="#2c5d87" $pl={153}>CPU single-thread<Caret /></ToolField>
        <ToolGap $h={178} />
        <TealBox $mt={4} $pr={141}>0]</TealBox>
        <TealBox $mt={3} $pr={60}>], [vertices: 16496]</TealBox>
        <ActionBtn $mt={9} $h={23} $bg="#82d4d9" $line="#7cc6ca">Voxelize mesh</ActionBtn>
        <ActionBtn $mt={4} $h={20} $bg="#b0b0b0" $line="#8c8c8c">Save Voxel Meshes as .asset to folder</ActionBtn>
      </ToolWindow>
      <RedFrame />

      <Dialog>
        <DlgTitle>
          <UnityTile />
          Select save folder
          <DlgClose><X size={17} strokeWidth={1.1} /></DlgClose>
        </DlgTitle>
        <DlgNav>
          <NavArrows>
            <ArrowLeft size={16} />
            <ArrowRight size={16} color="#c6c6c6" />
            <ChevronDown size={10} />
            <ArrowUp size={16} />
          </NavArrows>
          <AddressBar>
            <FirstCrumb><Folder /><CrumbSep>«</CrumbSep></FirstCrumb>
            {CRUMBS.map((c, i) => (
              <Crumb key={c.name} $w={c.w}>{c.name}{i < CRUMBS.length - 1 && <CrumbSep>›</CrumbSep>}</Crumb>
            ))}
            <AddrEnd>
              <ChevronDown size={13} />
              <AddrRefresh><RotateCw size={13} /></AddrRefresh>
            </AddrEnd>
          </AddressBar>
          <SearchField><MirrorIcon><Search size={13} strokeWidth={1} /></MirrorIcon>Search Example1</SearchField>
        </DlgNav>
        <CmdBar>
          <CmdItem $w={91}>Organize <Caret $c="#1d3a60" /></CmdItem>
          <CmdItem $w={70}>New folder</CmdItem>
          <ViewTools>
            <ViewIcon />
            <Caret $c="#1d3a60" />
            <HelpBadge>?</HelpBadge>
          </ViewTools>
        </CmdBar>
        <DlgMain>
          <NavPane>
            {NAV.map((n) => (
              <NavItem key={n.pl + n.label} $pl={n.pl} $mt={n.mt} $sel={n.sel}>{n.icon}{n.label}</NavItem>
            ))}
          </NavPane>
          <ScrollBar>
            <ScrollEnd $h={120} $align="flex-start"><ChevronUp size={12} strokeWidth={3} /></ScrollEnd>
            <ScrollThumb />
            <ScrollEnd $h={35} $align="flex-end"><ChevronDown size={12} strokeWidth={3} /></ScrollEnd>
          </ScrollBar>
          <FileList>
            <SortMark><ChevronUp size={13} strokeWidth={1} /></SortMark>
            <ListHead>
              <ListCol $w={273} $pl={19}>Name</ListCol>
              <ListCol $w={144}>Date modified</ListCol>
              <ListCol $w={120}>Type</ListCol>
              <ListCol $w={80}>Size</ListCol>
            </ListHead>
            <EmptyNote>No items match your search.</EmptyNote>
          </FileList>
        </DlgMain>
        <Footer>
          <FolderLine>Folder:<FolderInput>Example1</FolderInput></FolderLine>
          <ButtonLine>
            <DlgButton $w={105} $primary>Select Folder</DlgButton>
            <DlgButton $w={86}>Cancel</DlgButton>
          </ButtonLine>
          <Grip />
        </Footer>
      </Dialog>
      <Annotation>
        5. Save voxelized mesh<br />
        6. Now you can save voxelized gameObject<br />
        as prefab
      </Annotation>
    </Page>
  );
}
